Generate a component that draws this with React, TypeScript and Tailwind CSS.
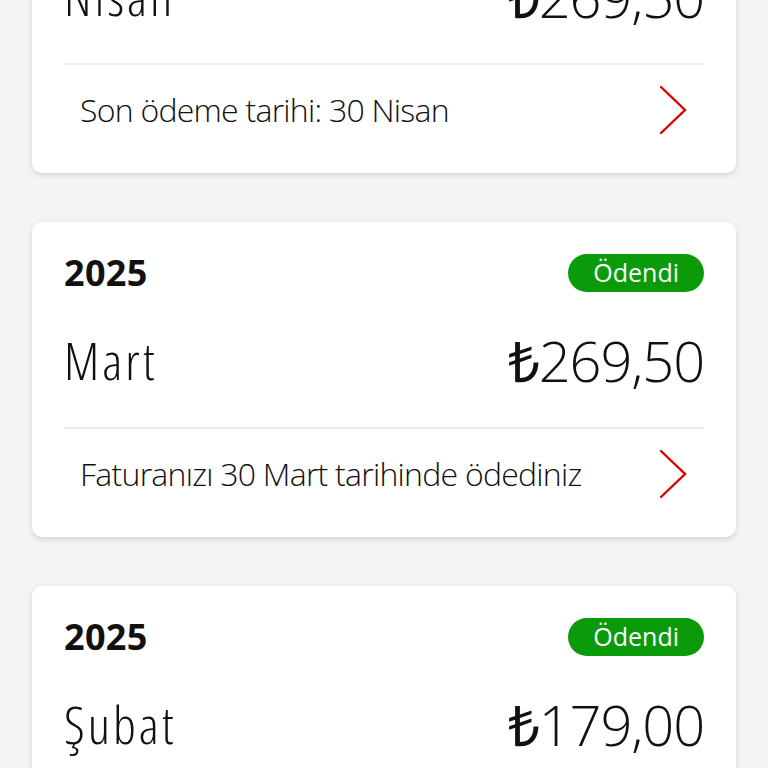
import React from "react";

const font = { fontFamily: '"Open Sans", "Liberation Sans", sans-serif' };

function Chevron() {
  return (
    <svg width="30" height="50" viewBox="0 0 30 50" fill="none">
      <path d="M3 2 L27 25 L3 48" stroke="#e00000" strokeWidth="2.4" strokeLinecap="round" strokeLinejoin="miter" />
    </svg>
  );
}

type Bill = { year: string; month: string; amount: string; status: string; note: string };

function Card({ bill }: { bill: Bill }) {
  return (
    <div className="bg-white rounded-[10px] shadow-[0_2px_6px_rgba(0,0,0,0.14)] px-8">
      <div className="pt-[32px] pb-[37px]">
        <div className="h-[38px] flex items-center justify-between">
          <span className="text-[36px] font-bold text-[#111] font-stretch-[92%] tracking-[0.3px] leading-none">{bill.year}</span>
          <span className="h-[38px] px-[25px] pb-[2px] rounded-full bg-[#0a9a0a] text-white text-[25px] font-normal font-stretch-[92%] leading-none flex items-center">
            {bill.status}
          </span>
        </div>
        <div className="mt-[38px] h-[60px] flex items-center justify-between">
          <span className="text-[52px] font-light text-[#111] font-stretch-condensed tracking-[3px] leading-none">{bill.month}</span>
          <span className="text-[56px] font-light text-[#111] font-stretch-[92%] tracking-[-1.1px] leading-none">{bill.amount}</span>
        </div>
      </div>
      <div className="border-t-2 border-[#ececec] h-[110px] pb-[18px] px-4 flex items-center justify-between">
        <span className="text-[32px] font-light text-[#111] font-stretch-[92%] tracking-[-0.75px] leading-none">{bill.note}</span>
        <Chevron />
      </div>
    </div>
  );
}

export default function App() {
  const bills: Bill[] = [
    { year: "2025", month: "Nisan", amount: "₺269,50", status: "Ödenmedi", note: "Son ödeme tarihi: 30 Nisan" },
    { year: "2025", month: "Mart", amount: "₺269,50", status: "Ödendi", note: "Faturanızı 30 Mart tarihinde ödediniz" },
    { year: "2025", month: "Şubat", amount: "₺179,00", status: "Ödendi", note: "Faturanızı 28 Şubat tarihinde ödediniz" },
  ];
  return (
    <div className="w-[768px] h-[768px] overflow-hidden bg-[#f4f4f4]" style={font}>
      <div className="mt-[-142px] px-8 flex flex-col gap-[49px]">
        {bills.map((b, i) => (
          <Card key={i} bill={b} />
        ))}
      </div>
    </div>
  );
}
